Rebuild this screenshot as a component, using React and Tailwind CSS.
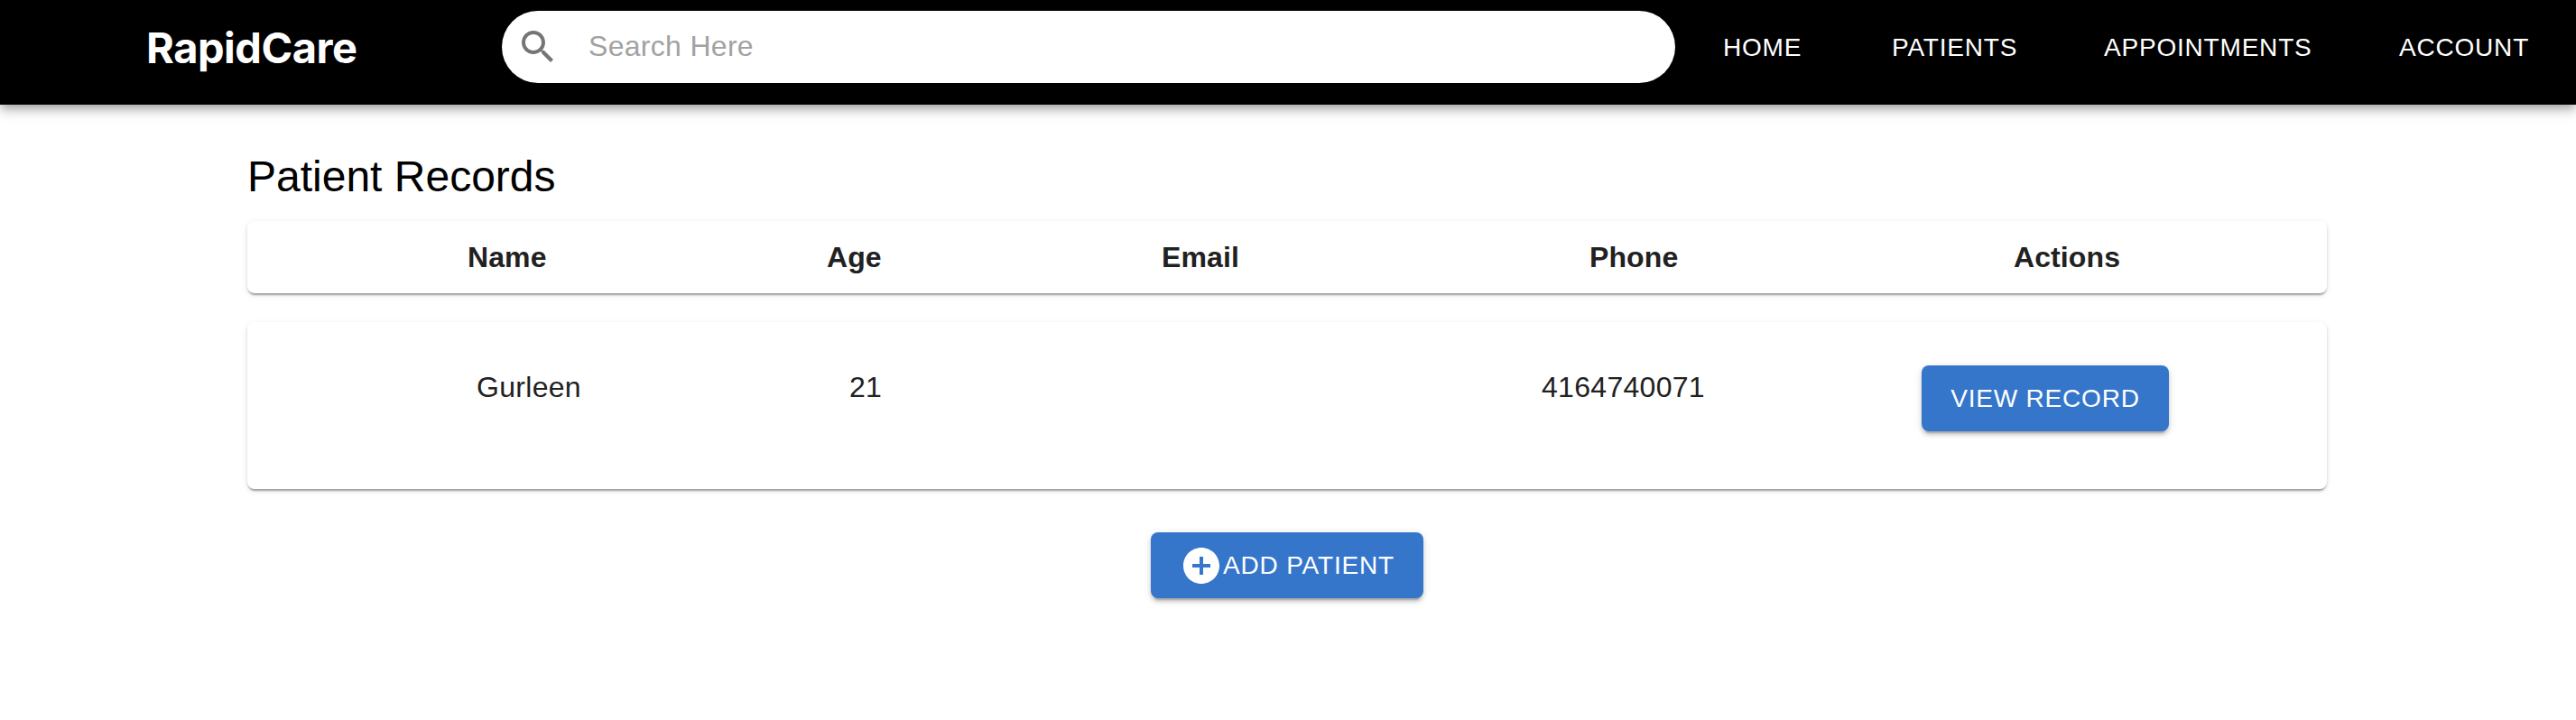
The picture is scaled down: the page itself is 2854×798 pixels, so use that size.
const cardShadow =
  'shadow-[0_4px_2px_-2px_rgba(0,0,0,0.2),0_2px_2px_0_rgba(0,0,0,0.14),0_2px_6px_0_rgba(0,0,0,0.12)]';
const buttonStyle =
  'flex items-center justify-center h-[73px] rounded-lg bg-[#3576cb] text-white text-[28px] leading-none tracking-[0.8px] shadow-[0_6px_2px_-4px_rgba(0,0,0,0.2),0_4px_4px_0_rgba(0,0,0,0.14),0_2px_10px_0_rgba(0,0,0,0.12)]';

function SearchIcon() {
  return (
    <svg viewBox="0 0 24 24" className="ml-4 size-12 shrink-0 fill-[#757575]">
      <path d="M15.5 14h-.79l-.28-.27C15.41 12.59 16 11.11 16 9.5 16 5.91 13.09 3 9.5 3S3 5.91 3 9.5 5.91 16 9.5 16c1.61 0 3.09-.59 4.23-1.57l.27.28v.79l5 4.99L20.49 19l-4.99-5zm-6 0C7.01 14 5 11.99 5 9.5S7.01 5 9.5 5 14 7.01 14 9.5 11.99 14 9.5 14z" />
    </svg>
  );
}

function AddCircleIcon() {
  return (
    <svg viewBox="0 0 24 24" className="size-12 shrink-0 fill-white">
      <path d="M12 2C6.48 2 2 6.48 2 12s4.48 10 10 10 10-4.48 10-10S17.52 2 12 2zm5 11h-4v4h-2v-4H7v-2h4V7h2v4h4v2z" />
    </svg>
  );
}

function Header() {
  return (
    <header className="flex h-[116px] w-full bg-black pt-3 shadow-[0_4px_8px_-2px_rgba(0,0,0,0.2),0_8px_10px_0_rgba(0,0,0,0.14),0_2px_20px_0_rgba(0,0,0,0.12)]">
      <div className="flex h-20 w-[556px] shrink-0 items-center pl-[162px] pt-px">
        <span className="font-['Inter',sans-serif] text-[47px] font-bold leading-none tracking-[-0.5px] text-white">
          RapidCare
        </span>
      </div>
      <div className="flex h-20 w-[1300px] shrink-0 items-center rounded-full bg-white">
        <SearchIcon />
        <span className="ml-8 pb-[2px] text-[32px] leading-none tracking-[0.3px] text-[#a2a2a2]">Search Here</span>
      </div>
      <nav className="flex h-20 items-center pl-[53px] pt-px text-[28px] leading-none tracking-[0.8px] text-white">
        <a className="w-[187px]">HOME</a>
        <a className="w-[235px]">PATIENTS</a>
        <a className="w-[327px]">APPOINTMENTS</a>
        <a>ACCOUNT</a>
      </nav>
    </header>
  );
}

export default function App() {
  return (
    <div className="min-h-[798px] w-[2854px] overflow-hidden bg-white font-['Liberation_Sans',sans-serif] text-[#212121]">
      <Header />
      <main className="ml-[274px] w-[2304px]">
        <h1 className="mt-[52px] h-[77px] text-[48px] leading-[56px] text-black">Patient Records</h1>
        <div
          className={`flex h-20 items-center rounded-lg bg-white text-[32px] font-bold leading-none tracking-[0.1px] ${cardShadow}`}
        >
          <span className="ml-[244px] w-[398px]">Name</span>
          <span className="w-[371px]">Age</span>
          <span className="w-[474px]">Email</span>
          <span className="w-[470px]">Phone</span>
          <span>Actions</span>
        </div>
        <div
          className={`mt-8 flex h-[185px] items-start rounded-lg bg-white text-[32px] tracking-[0.3px] ${cardShadow}`}
        >
          <span className="ml-[254px] mt-[52px] w-[413px] leading-10">Gurleen</span>
          <span className="mt-[52px] w-[767px] leading-10">21</span>
          <span className="mt-[52px] w-[421px] leading-10">4164740071</span>
          <button className={`mt-12 w-[274px] ${buttonStyle}`}>VIEW RECORD</button>
        </div>
        <div className="ml-[1001px] mt-12">
          <button className={`w-[302px] ${buttonStyle}`}>
            <AddCircleIcon />
            ADD PATIENT
          </button>
        </div>
      </main>
    </div>
  );
}
